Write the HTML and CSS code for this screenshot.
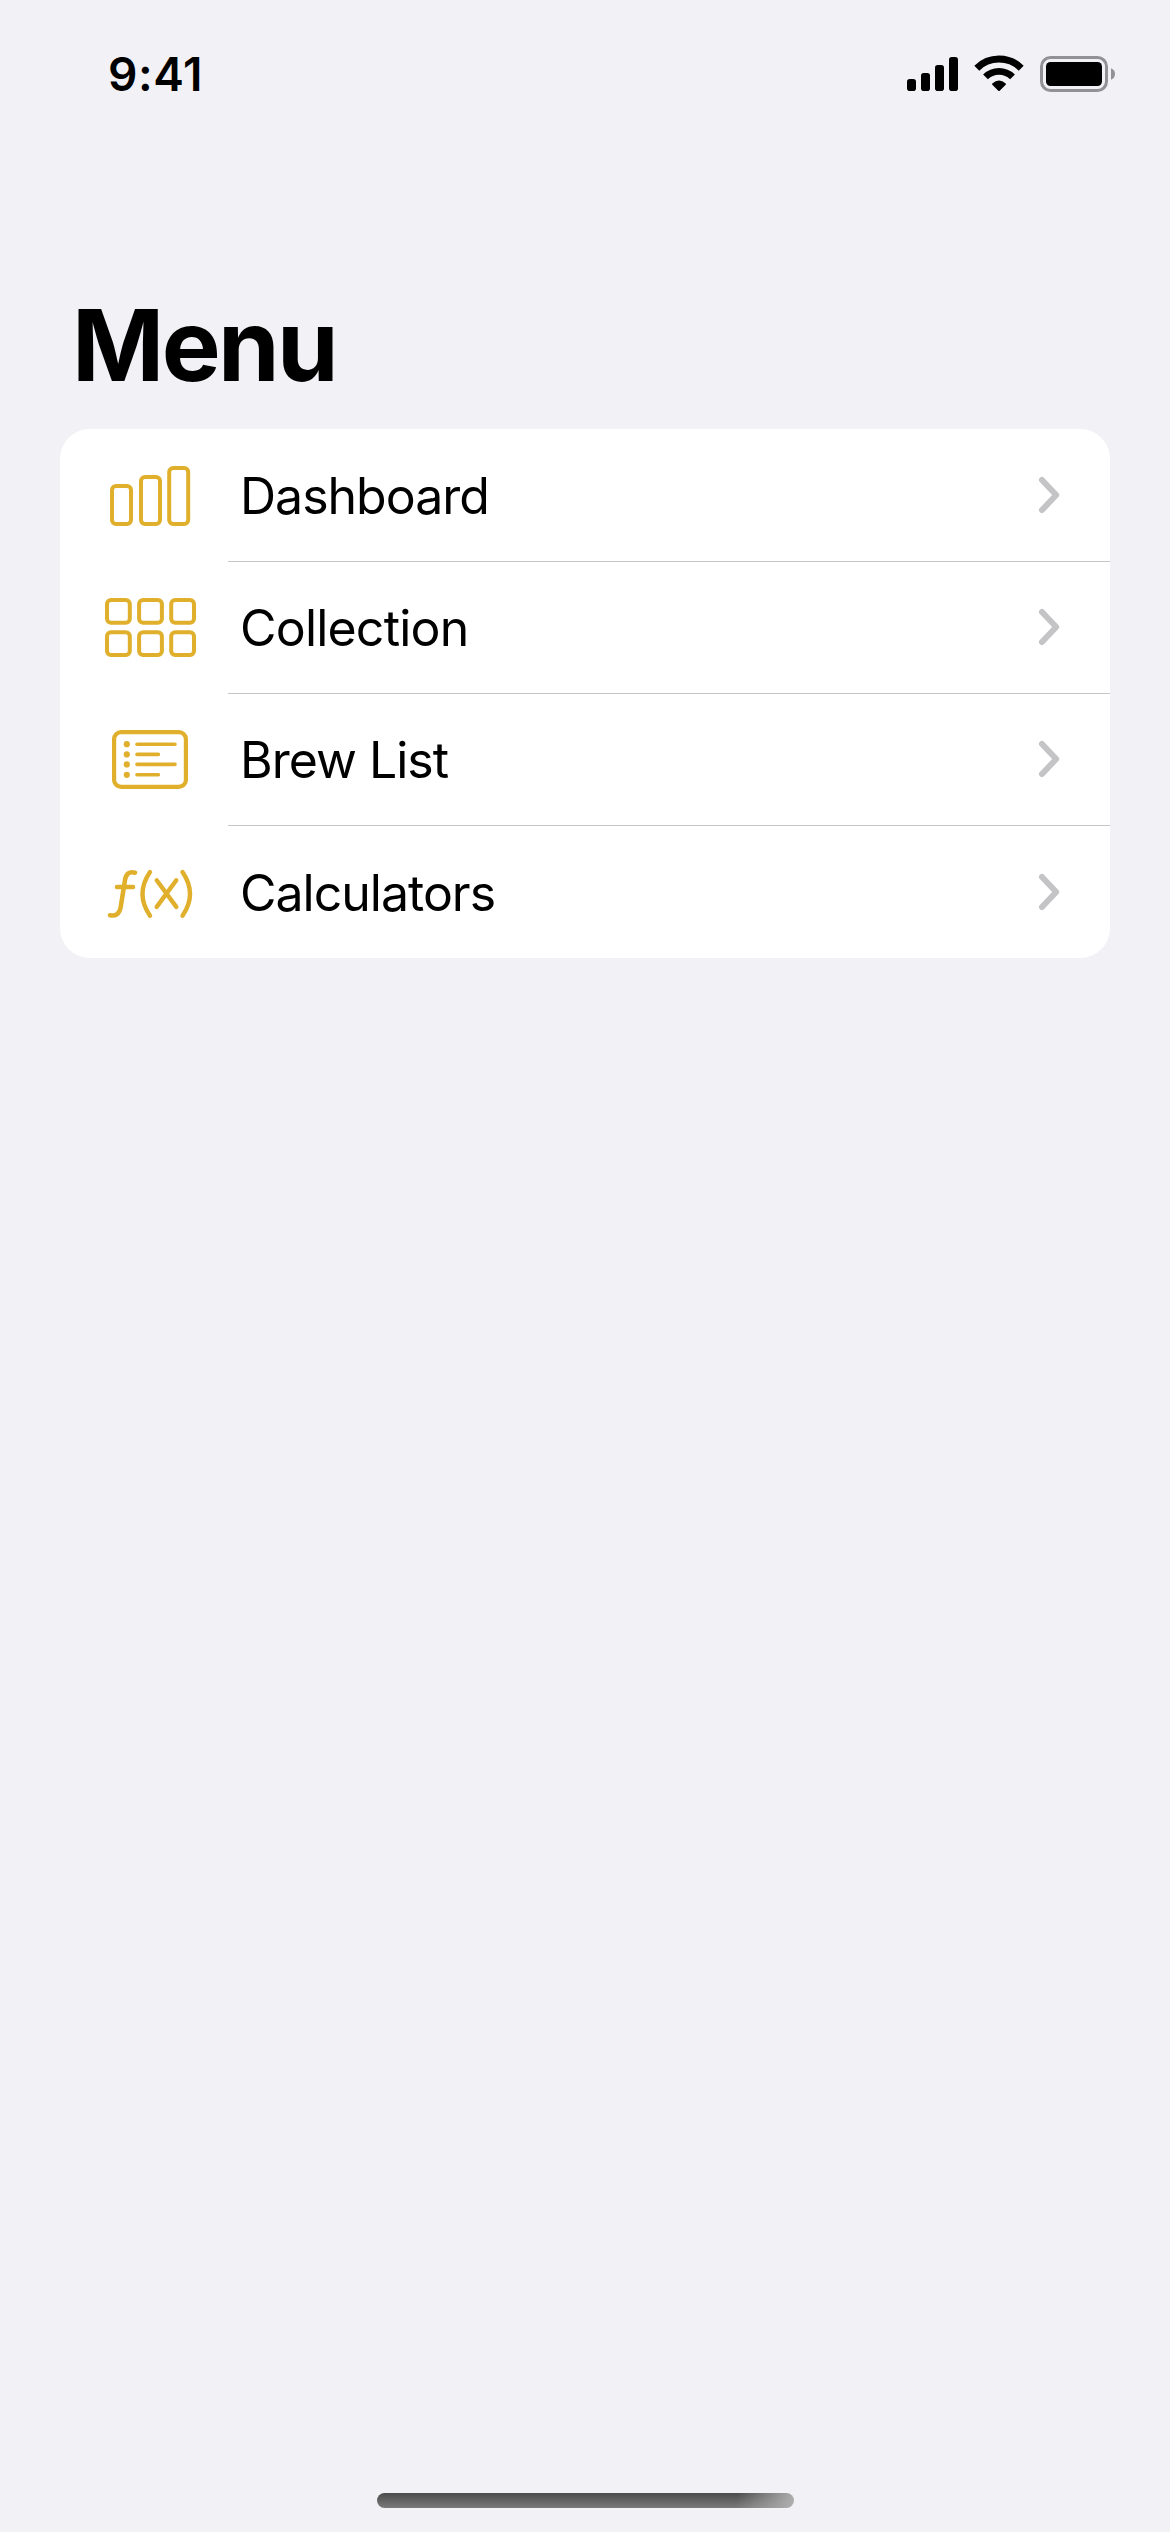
FILE: index.html
```html
<!DOCTYPE html>
<html lang="en">
<head>
<meta charset="utf-8">
<title>Menu</title>
<link rel="stylesheet" href="styles.css">
</head>
<body>
<div class="screen">
  <header class="status-bar">
    <span class="time">9:41</span>
    <svg class="status-icons" viewBox="0 0 240 70" width="240" height="70" aria-hidden="true">
      <rect x="17" y="39" width="9" height="12" rx="2.8"/>
      <rect x="31" y="33" width="9" height="18" rx="2.8"/>
      <rect x="45" y="25" width="9" height="26" rx="2.8"/>
      <rect x="59" y="17" width="9" height="34" rx="2.8"/>
      <g fill="none" stroke="#000">
        <path d="M86.8 28.2A31.5 31.5 0 0 1 131.2 28.2" stroke-width="7"/>
        <path d="M95.5 36.9A19.2 19.2 0 0 1 122.5 36.9" stroke-width="6.8"/>
      </g>
      <path d="M102.3 43.6Q109 37.5 115.7 43.6Q116.3 44.2 115.7 44.8L109.7 50.8Q109 51.4 108.3 50.8L102.3 44.8Q101.7 44.2 102.3 43.6Z"/>
      <rect x="151.5" y="17.5" width="65" height="33" rx="9" fill="none" stroke="#929195" stroke-width="3"/>
      <rect x="156" y="22" width="56" height="24" rx="4.5"/>
      <path d="M221 28.3Q225 30 225 34T221 39.7Z" fill="#929195"/>
    </svg>
  </header>
  <main>
    <h1 class="title">Menu</h1>
    <nav class="menu">
      <a class="row">
        <svg class="icon" viewBox="0 0 120 90" width="120" height="90" aria-hidden="true">
          <rect x="22" y="36" width="19" height="38" rx="4"/>
          <rect x="51" y="27" width="19" height="47" rx="4"/>
          <rect x="79.2" y="18" width="19" height="56" rx="4"/>
        </svg>
        <span class="label">Dashboard</span>
        <svg class="chevron" viewBox="0 0 24 38" width="24" height="38" aria-hidden="true"><path d="M4 4L18.2 19L4 34"/></svg>
      </a>
      <a class="row">
        <svg class="icon" viewBox="0 2 120 90" width="120" height="90" aria-hidden="true">
          <rect x="17" y="20" width="22.8" height="22.8" rx="4"/>
          <rect x="49.1" y="20" width="22.8" height="22.8" rx="4"/>
          <rect x="81.2" y="20" width="22.8" height="22.8" rx="4"/>
          <rect x="17" y="52.2" width="22.8" height="22.8" rx="4"/>
          <rect x="49.1" y="52.2" width="22.8" height="22.8" rx="4"/>
          <rect x="81.2" y="52.2" width="22.8" height="22.8" rx="4"/>
        </svg>
        <span class="label collection">Collection</span>
        <svg class="chevron" viewBox="0 0 24 38" width="24" height="38" aria-hidden="true"><path d="M4 4L18.2 19L4 34"/></svg>
      </a>
      <a class="row">
        <svg class="icon" viewBox="0 -1 120 90" width="120" height="90" aria-hidden="true">
          <rect x="24.1" y="17.1" width="71.8" height="54.8" rx="7" stroke-width="4.2"/>
          <path d="M47 29.2H85M47 39.4H68.4M47 49.4H85M47 59.8H68.4" stroke-width="3.6"/>
          <g class="dots">
            <circle cx="36.8" cy="29.2" r="3.1"/>
            <circle cx="36.8" cy="39.4" r="3.1"/>
            <circle cx="36.8" cy="49.4" r="3.1"/>
            <circle cx="36.8" cy="59.8" r="3.1"/>
          </g>
        </svg>
        <span class="label">Brew List</span>
        <svg class="chevron" viewBox="0 0 24 38" width="24" height="38" aria-hidden="true"><path d="M4 4L18.2 19L4 34"/></svg>
      </a>
      <a class="row">
        <svg class="icon" viewBox="0 -3.5 120 90" width="120" height="90" aria-hidden="true">
          <path d="M45 22.2Q36.5 19.8 35 29.5L30.7 56.5Q29 66.5 20 64.8M27 36.5H43" stroke-width="4.6"/>
          <path d="M60 21.5Q45 43.5 60 65.2M92.5 21.5Q107.5 43.5 92.5 65.2M66.7 29.8L86.3 56.4M86.3 29.8L66.7 56.4" stroke-width="4.4"/>
        </svg>
        <span class="label">Calculators</span>
        <svg class="chevron" viewBox="0 0 24 38" width="24" height="38" aria-hidden="true"><path d="M4 4L18.2 19L4 34"/></svg>
      </a>
    </nav>
  </main>
  <div class="home-indicator"></div>
</div>
</body>
</html>
```
FILE: styles.css
```css
* { box-sizing: border-box; }
body {
  margin: 0;
  background: #f2f1f6;
  color: #000;
  font-family: Inter, "Liberation Sans", sans-serif;
}
.screen {
  width: 1170px;
  height: 2532px;
  display: flex;
  flex-direction: column;
}
.status-bar {
  height: 150px;
  padding: 39px 40px 0 108px;
  display: flex;
  justify-content: space-between;
  align-items: flex-start;
}
.status-icons { margin-top: 1px; }
.time {
  font-size: 46px;
  font-weight: 600;
  line-height: 70px;
  letter-spacing: 0.6px;
}
main {
  flex: 1;
  padding: 135px 60px 0;
}
.title {
  margin: 0;
  padding-left: 12px;
  height: 144px;
  font-size: 99px;
  font-weight: 700;
  line-height: 120px;
  letter-spacing: -2.6px;
}
.menu {
  background: #fff;
  border-radius: 30px;
  overflow: hidden;
}
.row {
  height: 132px;
  padding: 0 48px 0 30px;
  display: flex;
  align-items: center;
  background: linear-gradient(#c6c6c8, #c6c6c8) 168px 0 / 882px 1px no-repeat;
}
.row:first-child { background: none; }
.row:last-child { height: 133px; }
.icon {
  fill: none;
  stroke: #e0b02c;
  stroke-width: 4;
  stroke-linecap: round;
  stroke-linejoin: round;
}
.dots {
  fill: #e0b02c;
  stroke: none;
}
.label {
  flex: 1;
  margin-left: 30px;
  padding-top: 2px;
  font-size: 50px;
  line-height: 60px;
  letter-spacing: -1px;
}
.collection { letter-spacing: -0.8px; }
.chevron {
  fill: none;
  stroke: #c4c4c6;
  stroke-width: 6;
  stroke-linecap: round;
  stroke-linejoin: round;
}
.home-indicator {
  width: 417px;
  height: 15px;
  margin: 0 auto 24px;
  border-radius: 8px;
  background:
    linear-gradient(100deg, transparent 86%, #b0b0b0 100%),
    linear-gradient(#4c4c4c, #7a7a7a);
}
```
